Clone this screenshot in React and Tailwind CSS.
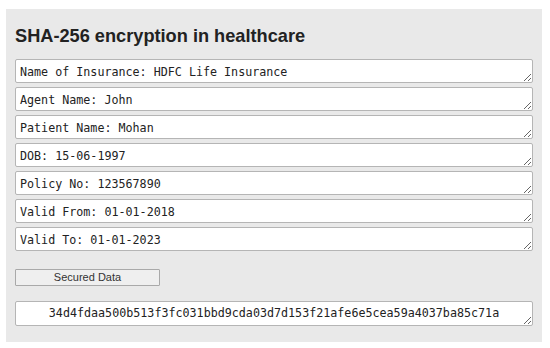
import React from "react";

const rows = [
  "Name of Insurance: HDFC Life Insurance",
  "Agent Name: John",
  "Patient Name: Mohan",
  "DOB: 15-06-1997",
  "Policy No: 123567890",
  "Valid From: 01-01-2018",
  "Valid To: 01-01-2023",
];

export default function App() {
  return (
    <div className="w-[550px] h-[348px] bg-white pt-[9px] pl-[6px] overflow-hidden">
      <div className="w-[536px] h-[333px] bg-[#e9e9e9] px-[9px] pt-[15px] flex flex-col">
        <h1 className="font-['Liberation_Sans',Arial,sans-serif] text-[18.2px] leading-[24px] font-bold text-[#222] m-0">
          SHA-256 encryption in healthcare
        </h1>
        <div className="mt-[11px] flex flex-col gap-[4px]">
          {rows.map((r) => (
            <textarea
              key={r}
              readOnly
              defaultValue={r}
              className="block w-[518px] h-[24px] bg-white border border-[#b5b5b5] rounded-[2px] px-[4px] pt-[5px] pb-0 font-['DejaVu_Sans_Mono',monospace] text-[11.7px] leading-[14px] text-[#222] resize-y overflow-hidden outline-none"
            />
          ))}
        </div>
        <button className="mt-[18px] w-[145px] h-[17px] bg-[#efefef] border border-[#a9a9a9] rounded-[1px] font-['Liberation_Sans',Arial,sans-serif] text-[11px] leading-[15px] text-[#333] p-0">
          Secured Data
        </button>
        <textarea
          readOnly
          defaultValue="34d4fdaa500b513f3fc031bbd9cda03d7d153f21afe6e5cea59a4037ba85c71a"
          className="mt-[15px] block w-[518px] h-[25px] bg-white border border-[#b5b5b5] rounded-[2px] px-[4px] pt-[4px] pb-0 font-['DejaVu_Sans_Mono',monospace] text-[11.7px] leading-[14px] text-[#222] text-center resize-y overflow-hidden outline-none"
        />
      </div>
    </div>
  );
}
